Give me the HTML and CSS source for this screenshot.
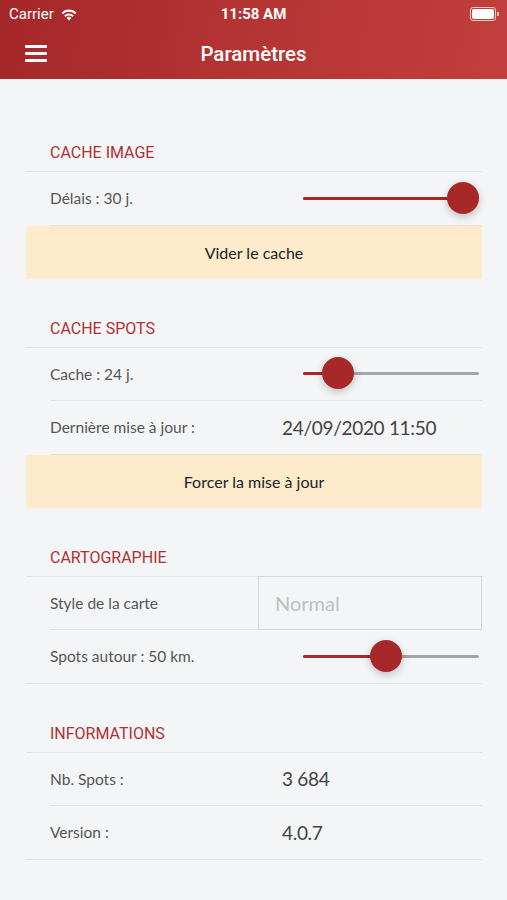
FILE: index.html
```html
<!DOCTYPE html>
<html lang="fr">
  <head>
    <meta charset="UTF-8" />
    <meta name="viewport" content="width=device-width, initial-scale=1.0" />
    <title>Paramètres</title>

    <link rel="stylesheet" href="styles.css">
  </head>
  <body>
    <header class="topbar">
      <div class="statusbar">
        <div class="carrier">
          Carrier
          <svg class="wifi" width="18" height="13" viewBox="0 0 18 13">
            <path d="M9 12.5 L6.6 9.9 A3.4 3.4 0 0 1 11.4 9.9 Z" fill="#fff" />
            <path d="M4.2 7.4 A6.8 6.8 0 0 1 13.8 7.4 L12.3 8.9 A4.7 4.7 0 0 0 5.7 8.9 Z" fill="#fff" />
            <path d="M1.5 4.7 A10.6 10.6 0 0 1 16.5 4.7 L15 6.2 A8.5 8.5 0 0 0 3 6.2 Z" fill="#fff" />
          </svg>
        </div>
        <div class="clock">11:58 AM</div>
        <div class="battery">
          <span class="battery-body"><span class="battery-level"></span></span>
          <span class="battery-nub"></span>
        </div>
      </div>
      <nav class="navbar">
        <a class="menu-btn" href="#">
          <span></span><span></span><span></span>
        </a>
        <h1 class="navbar-title">Paramètres</h1>
      </nav>
    </header>

    <main class="settings">
      <section class="group">
        <h2 class="group-title">CACHE IMAGE</h2>
        <div class="list">
          <div class="row">
            <span class="label">Délais : 30 j.</span>
            <div class="slider" style="--v: 1">
              <span class="fill"></span>
              <span class="thumb"></span>
            </div>
          </div>
        </div>
        <button class="action">Vider le cache</button>
      </section>

      <section class="group">
        <h2 class="group-title">CACHE SPOTS</h2>
        <div class="list">
          <div class="row">
            <span class="label">Cache : 24 j.</span>
            <div class="slider" style="--v: 0.13">
              <span class="fill"></span>
              <span class="thumb"></span>
            </div>
          </div>
          <div class="row">
            <span class="label">Dernière mise à jour :</span>
            <span class="value">24/09/2020 11:50</span>
          </div>
        </div>
        <button class="action">Forcer la mise à jour</button>
      </section>

      <section class="group">
        <h2 class="group-title">CARTOGRAPHIE</h2>
        <div class="list">
          <div class="row">
            <span class="label">Style de la carte</span>
            <input class="field" type="text" placeholder="Normal" />
          </div>
          <div class="row last">
            <span class="label">Spots autour : 50 km.</span>
            <div class="slider" style="--v: 0.465">
              <span class="fill"></span>
              <span class="thumb"></span>
            </div>
          </div>
        </div>
      </section>

      <section class="group">
        <h2 class="group-title">INFORMATIONS</h2>
        <div class="list">
          <div class="row">
            <span class="label">Nb. Spots :</span>
            <span class="value">3 684</span>
          </div>
          <div class="row last">
            <span class="label">Version :</span>
            <span class="value">4.0.7</span>
          </div>
        </div>
      </section>
    </main>
  </body>
</html>
```

FILE: styles.css
```css
body {
  margin: 0;
  background-color: #f4f5f7;
  font-family: Lato, "Open Sans", sans-serif;
  color: #555;
}

.topbar {
  height: 79px;
  background: linear-gradient(100deg, #a5272a 0%, #b53434 50%, #c1403e 100%);
  color: #fff;
}

.statusbar {
  display: flex;
  align-items: center;
  justify-content: space-between;
  height: 28px;
  padding: 0 8px 0 9px;
  font-family: Roboto, "Liberation Sans", sans-serif;
  font-size: 15px;
  position: relative;
}

.carrier {
  display: flex;
  align-items: center;
  gap: 6px;
}

.clock {
  position: absolute;
  left: 0;
  right: 0;
  text-align: center;
  font-weight: bold;
}

.battery {
  display: flex;
  align-items: center;
}

.battery-body {
  display: block;
  width: 22px;
  height: 10px;
  border: 1px solid rgba(255, 255, 255, 0.7);
  border-radius: 3px;
  padding: 1px;
}

.battery-level {
  display: block;
  height: 100%;
  background-color: #fff;
  border-radius: 2px;
}

.battery-nub {
  display: block;
  width: 2px;
  height: 4px;
  margin-left: 1px;
  background-color: rgba(255, 255, 255, 0.7);
  border-radius: 0 1px 1px 0;
}

.navbar {
  display: flex;
  align-items: center;
  justify-content: center;
  height: 51px;
  position: relative;
}

.menu-btn {
  position: absolute;
  left: 25px;
  top: 17px;
  display: flex;
  flex-direction: column;
  gap: 4.5px;
  width: 22px;
}

.menu-btn span {
  display: block;
  height: 2.5px;
  background-color: #fff;
  border-radius: 1px;
}

.navbar-title {
  margin: 0;
  font-family: Roboto, "Liberation Sans", sans-serif;
  font-size: 20.5px;
  font-weight: 500;
}

.settings {
  padding: 25px 25px 0 26px;
}

.group {
  margin-top: 40px;
}

.group + .group {
  margin-top: 41px;
}

.group-title {
  margin: 0;
  padding: 0 24px 9px;
  font-family: Roboto, "Liberation Sans", sans-serif;
  font-size: 16px;
  line-height: 18px;
  font-weight: normal;
  color: #b03133;
}

.list {
  border-top: 1px solid #e1e2e4;
}

.row {
  display: flex;
  align-items: center;
  justify-content: space-between;
  height: 52.5px;
  margin-left: 24px;
  border-bottom: 1px solid #e1e2e4;
}

.row.last {
  margin-left: 0;
  padding-left: 24px;
}

.label {
  font-size: 15.5px;
  color: #555;
}

.value {
  width: 200px;
  font-size: 19px;
  letter-spacing: -0.3px;
  color: #444;
}

.field {
  align-self: stretch;
  box-sizing: border-box;
  width: 224px;
  height: 54px;
  margin-top: -1px;
  padding: 0 16px;
  border: 1px solid #d4d5d7;
  background: transparent;
  font-family: Lato, "Open Sans", sans-serif;
  font-size: 20px;
}

.field::placeholder {
  color: #bdbfc2;
}

.slider {
  position: relative;
  width: 176px;
  height: 3px;
  margin-right: 3px;
  background-color: #a4a4a6;
  border-radius: 2px;
}

.slider .fill {
  position: absolute;
  left: 0;
  top: 0;
  height: 100%;
  width: calc(16px + 144px * var(--v));
  background-color: #a8282a;
  border-radius: 2px;
}

.slider .thumb {
  position: absolute;
  top: -15px;
  left: calc(144px * var(--v));
  width: 32px;
  height: 32px;
  border-radius: 50%;
  background-color: #a8282a;
  box-shadow: 0 3px 8px rgba(0, 0, 0, 0.22);
}

.action {
  display: block;
  width: 100%;
  height: 53px;
  border: none;
  background-color: #fdebcc;
  font-family: Lato, "Open Sans", sans-serif;
  font-size: 16px;
  color: #222;
}
```
